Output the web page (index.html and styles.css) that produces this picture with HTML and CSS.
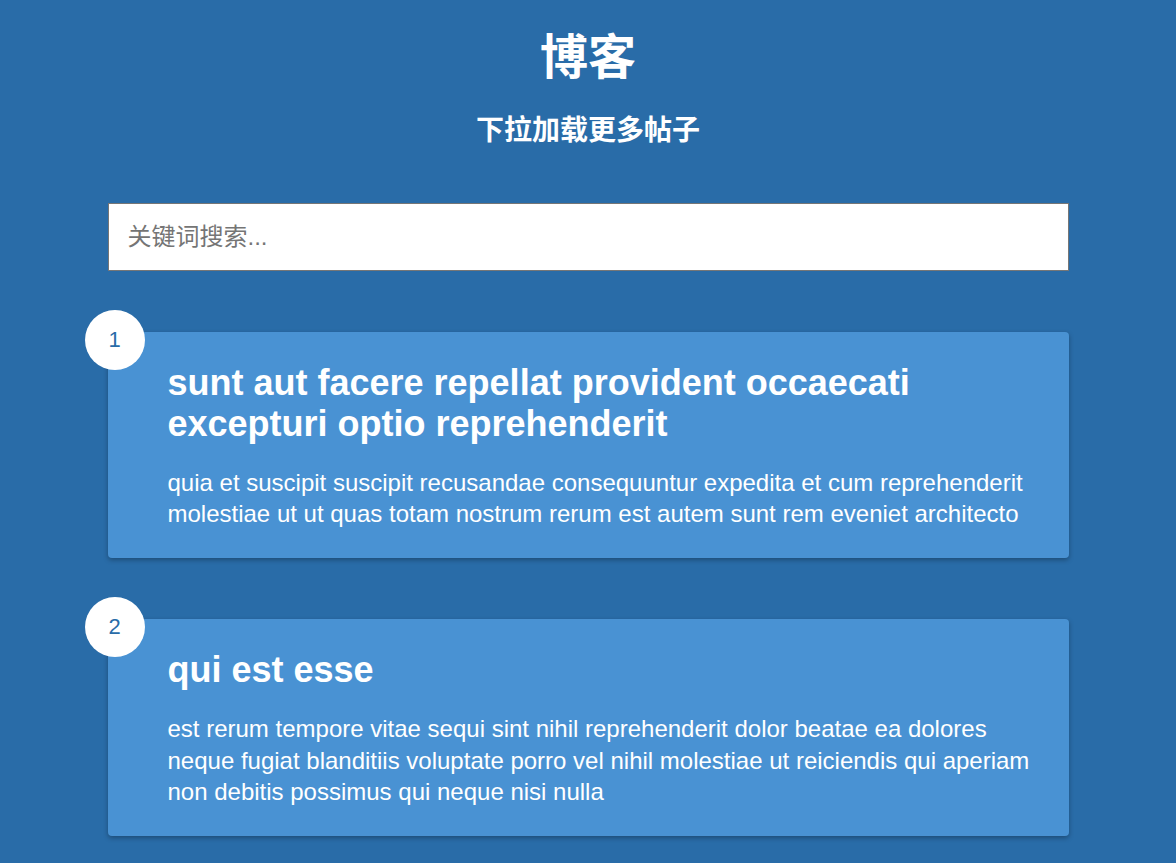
FILE: index.html
```html
<!DOCTYPE html>
<html lang="zh">
<head>
<meta charset="utf-8">
<title>博客</title>
<link rel="stylesheet" href="styles.css">
</head>
<body>
<header class="header">
  <h1 class="title">博客</h1>
  <h2 class="subtitle">下拉加载更多帖子</h2>
</header>
<div class="filter-container">
  <input type="text" class="filter" placeholder="关键词搜索...">
</div>
<main class="posts">
  <article class="post">
    <div class="number">1</div>
    <div class="post-info">
      <h2 class="post-title">sunt aut facere repellat provident occaecati excepturi optio reprehenderit</h2>
      <p class="post-body">quia et suscipit suscipit recusandae consequuntur expedita et cum reprehenderit molestiae ut ut quas totam nostrum rerum est autem sunt rem eveniet architecto</p>
    </div>
  </article>
  <article class="post">
    <div class="number">2</div>
    <div class="post-info">
      <h2 class="post-title">qui est esse</h2>
      <p class="post-body">est rerum tempore vitae sequi sint nihil reprehenderit dolor beatae ea dolores neque fugiat blanditiis voluptate porro vel nihil molestiae ut reiciendis qui aperiam non debitis possimus qui neque nisi nulla</p>
    </div>
  </article>
</main>
</body>
</html>
```

FILE: styles.css
```css
* { box-sizing: border-box; }
html, body { height: 100%; }
body {
  margin: 0;
  background-color: #296ca8;
  color: #fff;
  font-family: "Liberation Sans", Arial, "Noto Sans CJK SC", sans-serif;
  display: flex;
  flex-direction: column;
  align-items: center;
  overflow: hidden;
}
.header {
  display: flex;
  flex-direction: column;
  align-items: center;
  padding-top: 24px;
}
.title {
  margin: 0;
  font-size: 48px;
  line-height: 68px;
  font-weight: bold;
}
.subtitle {
  margin: 23px 0 0;
  font-size: 28px;
  line-height: 32px;
  font-weight: bold;
}
.filter-container {
  margin-top: 56px;
  width: 961px;
}
.filter {
  display: block;
  width: 100%;
  height: 68px;
  padding: 0 19px;
  font-size: 24px;
  font-family: "Liberation Sans", Arial, "Noto Sans CJK SC", sans-serif;
  border: 1px solid #767676;
  color: #333;
  background: #fff;
  outline: none;
}
.filter::placeholder { color: #757575; }
.posts {
  display: flex;
  flex-direction: column;
  gap: 61px;
  margin-top: 61px;
  width: 961px;
}
.post {
  position: relative;
  background-color: #4992d3;
  box-shadow: 0 2px 5px rgba(0, 0, 0, 0.3);
  border-radius: 4px;
  padding: 30px 24px 29px 60px;
}
.number {
  position: absolute;
  top: -22px;
  left: -23px;
  width: 60px;
  height: 60px;
  border-radius: 50%;
  background: #fff;
  color: #296ca8;
  font-size: 22px;
  display: flex;
  align-items: center;
  justify-content: center;
}
.post-title {
  margin: 0;
  font-size: 36px;
  line-height: 41px;
  font-weight: bold;
}
.post-body {
  margin: 23px 0 0;
  font-size: 24px;
  line-height: 31.2px;
}
```
